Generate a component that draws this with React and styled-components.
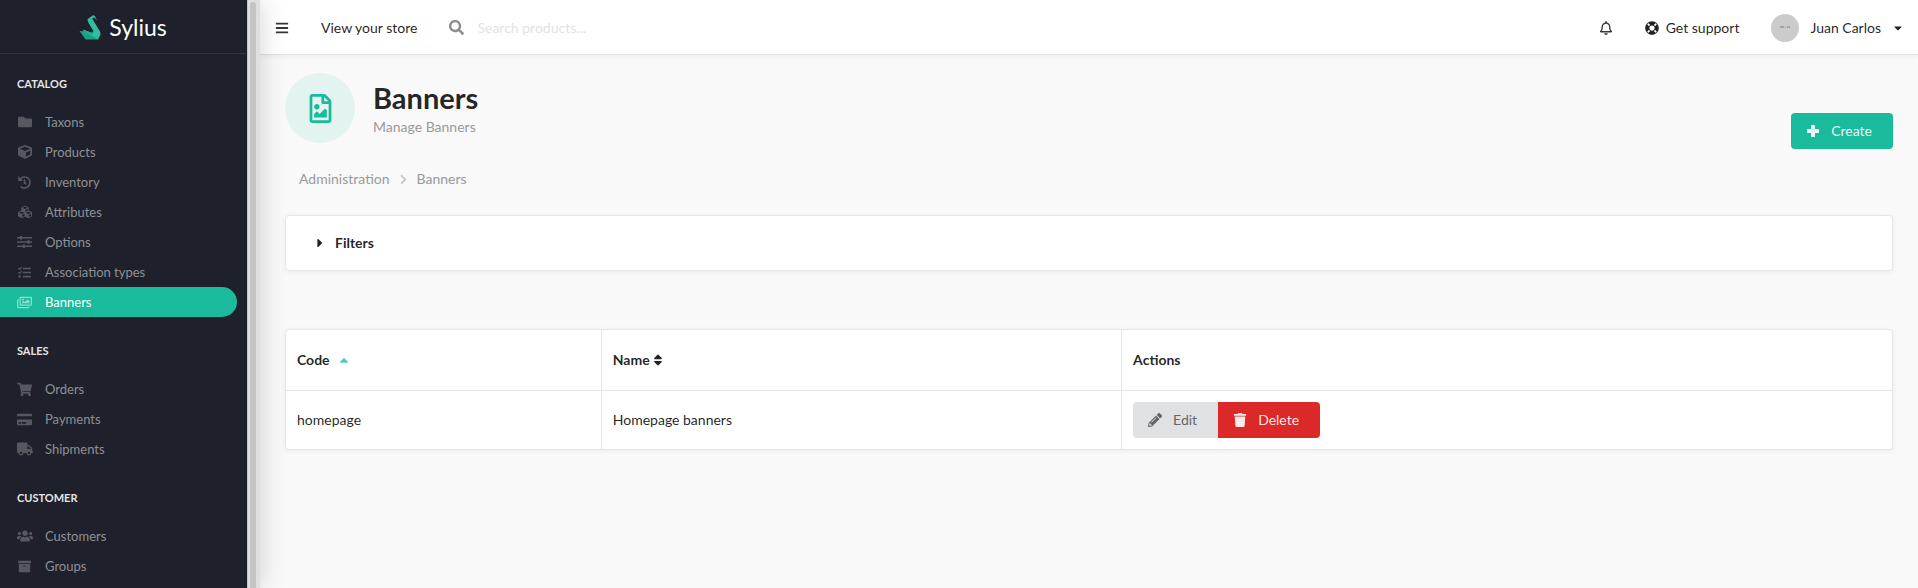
import React from 'react';
import styled, { createGlobalStyle } from 'styled-components';
import {
  FaFolder, FaCube, FaHistory, FaCubes, FaTasks, FaRegImages, FaShoppingCart,
  FaCreditCard, FaTruck, FaUsers, FaArchive, FaBars, FaSearch, FaRegBell, FaLifeRing,
  FaCaretDown, FaCaretRight, FaCaretUp, FaRegFileImage, FaPencilAlt, FaTrash, FaSort,
  FaChevronRight,
} from 'react-icons/fa';

const GlobalStyle = createGlobalStyle`
  *, *::before, *::after { box-sizing: border-box; }
  body {
    margin: 0;
    background: #f9f9f9;
    color: rgba(0, 0, 0, 0.87);
    font: 14px/20px Lato, "Liberation Sans", sans-serif;
  }
  a { color: inherit; text-decoration: none; }
  button, input { font: inherit; }
  svg { display: block; flex: none; }
`;

const Page = styled.div`
  display: flex;
  height: 100vh;
  overflow: hidden;
`;

const Sidebar = styled.aside`
  display: flex;
  flex: none;
  width: 260px;
  background: #dfdfde;
  box-shadow: 0 0 24px rgba(34, 36, 38, 0.2);
  z-index: 2;
`;

const SidebarPanel = styled.nav`
  flex: 1;
  background: #1e212b;
  border-right: 1px solid #1b1a26;
  overflow: hidden;
`;

const ScrollTrack = styled.div`
  flex: none;
  width: 13px;
  padding: 2px 4px 0 2px;
  border-left: 1px solid #c6c7c6;
`;

const ScrollThumb = styled.div`
  height: 100%;
  border-radius: 3px 3px 0 0;
  background: #c3c4c3;
`;

const Brand = styled.a`
  display: flex;
  align-items: center;
  justify-content: center;
  gap: 8px;
  height: 54px;
  border-bottom: 1px solid #31343d;
  color: #fff;
  font-size: 23px;
`;

const Section = styled.section`
  padding-top: 24px;
  &:first-of-type { padding-top: 20px; }
`;

const SectionTitle = styled.h2`
  margin: 0 0 13px;
  padding: 0 17px;
  color: #e4e4e6;
  font-size: 11px;
  line-height: 20px;
  font-weight: 700;
  text-transform: uppercase;
`;

const MenuItem = styled.a`
  display: flex;
  align-items: center;
  gap: 12px;
  height: 30px;
  margin-right: 9px;
  padding-left: 16px;
  border-radius: 0 15px 15px 0;
  background: ${({ $active }) => ($active ? '#1abb9c' : 'transparent')};
  color: ${({ $active }) => ($active ? '#fff' : '#8e9095')};
  font-size: 13px;
`;

const MenuIcon = styled.span`
  display: flex;
  justify-content: center;
  width: 17px;
  font-size: ${({ $size }) => $size}px;
  opacity: 0.5;
`;

const Main = styled.div`
  display: flex;
  flex-direction: column;
  flex: 1;
  min-width: 0;
`;

const TopBar = styled.header`
  display: flex;
  align-items: center;
  justify-content: space-between;
  flex: none;
  height: 55px;
  padding: 1px 14px 0 15px;
  background: #fff;
  border-bottom: 1px solid #e2e2e3;
  box-shadow: 0 1px 5px rgba(34, 36, 38, 0.07);
`;

const TopGroup = styled.div`
  display: flex;
  align-items: center;
  gap: 32px;
`;

const IconButton = styled.button`
  display: flex;
  padding: 0;
  border: 0;
  background: none;
  color: #35363a;
`;

const SearchBox = styled.label`
  display: flex;
  align-items: center;
  gap: 13px;
  color: #8c8c8c;
  svg { font-size: 15px; }
`;

const SearchInput = styled.input`
  width: 200px;
  padding: 0;
  border: 0;
  outline: 0;
  background: none;
  color: inherit;
  &::placeholder { color: #e2e2e3; opacity: 1; }
`;

const TopLink = styled.a`
  display: flex;
  align-items: center;
  gap: 7px;
`;

const UserButton = styled.button`
  display: flex;
  align-items: center;
  gap: 11px;
  padding: 0;
  border: 0;
  background: none;
  color: inherit;
  > svg { font-size: 12px; }
`;

const Avatar = styled.span`
  display: flex;
  align-items: center;
  justify-content: center;
  width: 28px;
  height: 28px;
  border-radius: 50%;
  background: #cbcbcb;
`;

const Content = styled.main`
  padding: 18px 25px;
`;

const Heading = styled.div`
  display: flex;
  align-items: center;
  justify-content: space-between;
`;

const HeadingTitle = styled.div`
  display: flex;
  align-items: center;
  gap: 18px;
`;

const HeadingIcon = styled.span`
  display: flex;
  align-items: center;
  justify-content: center;
  width: 70px;
  height: 70px;
  border-radius: 50%;
  background: #e3f3ef;
  color: #1abb9c;
  font-size: 29px;
`;

const Title = styled.h1`
  margin: 0;
  padding-top: 2px;
  font-size: 29px;
  line-height: 34px;
  font-weight: 700;
`;

const Subtitle = styled.p`
  margin: 2px 0 0;
  color: #999;
`;

const Button = styled.button`
  display: flex;
  align-items: center;
  gap: 11px;
  height: 36px;
  padding: 0 21px 0 15px;
  border: 0;
  border-radius: 4px;
  background: ${({ $color }) => $color};
  color: ${({ $text }) => $text || 'rgba(255, 255, 255, 0.9)'};
`;

const HeadingAction = styled.div`
  align-self: flex-end;
  margin-bottom: -6px;
`;

const Breadcrumb = styled.nav`
  display: flex;
  align-items: center;
  gap: 8px;
  padding: 26px 14px;
  color: #999;
  svg { color: #c4c4c4; font-size: 11px; }
`;

const Panel = styled.section`
  background: #fff;
  border: 1px solid #e6e6e7;
  border-radius: 4px;
  box-shadow: 0 1px 5px rgba(34, 36, 38, 0.07);
`;

const FilterToggle = styled.button`
  display: flex;
  align-items: center;
  gap: 8px;
  width: 100%;
  height: 54px;
  padding: 0 27px;
  border: 0;
  background: none;
  color: inherit;
  font-weight: 700;
`;

const TablePanel = styled(Panel)`
  margin-top: 58px;
`;

const Table = styled.table`
  width: 100%;
  table-layout: fixed;
  border-collapse: separate;
  border-spacing: 0;
  text-align: left;
`;

const HeadCell = styled.th`
  width: ${({ $width }) => $width || 'auto'};
  height: 61px;
  padding: 0 11px;
  border-bottom: 1px solid #e6e6e7;
  & + & { border-left: 1px solid #e6e6e7; }
`;

const Cell = styled.td`
  height: 58px;
  padding: 0 11px;
  & + & { border-left: 1px solid #e6e6e7; }
`;

const SortLink = styled.a`
  display: flex;
  align-items: center;
  gap: ${({ $gap }) => $gap}px;
`;

const ButtonGroup = styled.div`
  display: flex;
  button:first-child { border-radius: 4px 0 0 4px; }
  button:last-child { border-radius: 0 4px 4px 0; }
`;

const Swan = () => (
  <svg width="22" height="26" viewBox="0 0 22 26" aria-hidden="true">
    <path fill="#1aa183" d="M0.5 17 L4.5 17.2 L4 15.4 L12.5 18.5 L15.5 16.5 L19.6 25.6 L6.6 25.6 Z" />
    <path fill="#2fbfa0" d="M14.3 1 L8.5 5.2 L9 8 L13.5 15.5 L15 18 L12 21 L18.8 25.6 L21.6 20.4 L21.2 18 L13.2 4.6 L15.2 3.4 L18 6.6 L16.2 2.6 Z" />
    <path fill="#25ad8e" d="M4 15.4 L14 19.5 L12 22 L6.5 19 Z" />
  </svg>
);

const SlidersIcon = () => (
  <svg width="15" height="12" viewBox="0 0 15 12" fill="currentColor" aria-hidden="true">
    <path d="M0 1h3V0h2v1h10v1.6H5v1H3v-1H0zM0 5.2h10.5v-1h2v1H15v1.6h-2.5v1h-2v-1H0zM0 9.4h6v-1h2v1h7V11H8v1H6v-1H0z" />
  </svg>
);

const PlusIcon = () => (
  <svg width="14" height="14" viewBox="0 0 14 14" fill="currentColor" aria-hidden="true">
    <path d="M5.6 1h2.8q.6 0 .6.6V5h3.4q.6 0 .6.6v2.8q0 .6-.6.6H9v3.4q0 .6-.6.6H5.600q-.6 0-.6-.6V9H1.600Q1 9 1 8.400V5.600Q1 5 1.600 5H5V1.600Q5 1 5.600 1z" />
  </svg>
);

const sections = [
  { title: 'Catalog', items: [
    ['Taxons', FaFolder, 14],
    ['Products', FaCube, 14],
    ['Inventory', FaHistory, 13],
    ['Attributes', FaCubes, 14],
    ['Options', SlidersIcon, 14],
    ['Association types', FaTasks, 13],
    ['Banners', FaRegImages, 15],
  ] },
  { title: 'Sales', items: [
    ['Orders', FaShoppingCart, 15],
    ['Payments', FaCreditCard, 15],
    ['Shipments', FaTruck, 16],
  ] },
  { title: 'Customer', items: [
    ['Customers', FaUsers, 16],
    ['Groups', FaArchive, 13],
  ] },
];

export default function App() {
  return (
    <>
      <GlobalStyle />
      <Page>
        <Sidebar>
          <SidebarPanel aria-label="Administration menu">
            <Brand href="#"><Swan />Sylius</Brand>
            {sections.map(({ title, items }) => (
              <Section key={title}>
                <SectionTitle>{title}</SectionTitle>
                {items.map(([label, Icon, size]) => (
                  <MenuItem key={label} href="#" $active={label === 'Banners'}>
                    <MenuIcon $size={size}><Icon /></MenuIcon>
                    {label}
                  </MenuItem>
                ))}
              </Section>
            ))}
          </SidebarPanel>
          <ScrollTrack><ScrollThumb /></ScrollTrack>
        </Sidebar>
        <Main>
          <TopBar>
            <TopGroup>
              <IconButton aria-label="Toggle menu"><FaBars /></IconButton>
              <a href="#">View your store</a>
              <SearchBox>
                <FaSearch />
                <SearchInput type="text" placeholder="Search products..." aria-label="Search products" />
              </SearchBox>
            </TopGroup>
            <TopGroup>
              <IconButton aria-label="Notifications"><FaRegBell /></IconButton>
              <TopLink href="#"><FaLifeRing />Get support</TopLink>
              <UserButton>
                <Avatar>
                  <svg width="10" height="3" viewBox="0 0 10 3" fill="#a6a6a6" aria-hidden="true">
                    <path d="M0 0h4v2H0zM5 1h1v1H5zM7 0h3v2H7z" />
                  </svg>
                </Avatar>
                Juan Carlos
                <FaCaretDown />
              </UserButton>
            </TopGroup>
          </TopBar>
          <Content>
            <Heading>
              <HeadingTitle>
                <HeadingIcon><FaRegFileImage /></HeadingIcon>
                <div>
                  <Title>Banners</Title>
                  <Subtitle>Manage Banners</Subtitle>
                </div>
              </HeadingTitle>
              <HeadingAction>
                <Button $color="#1abb9c"><PlusIcon />Create</Button>
              </HeadingAction>
            </Heading>
            <Breadcrumb aria-label="Breadcrumb">
              <a href="#">Administration</a>
              <FaChevronRight />
              <span>Banners</span>
            </Breadcrumb>
            <Panel>
              <FilterToggle><FaCaretRight />Filters</FilterToggle>
            </Panel>
            <TablePanel>
              <Table>
                <thead>
                  <tr>
                    <HeadCell $width="19.6%"><SortLink href="#" $gap={7}>Code <FaCaretUp color="#4dcbb4" /></SortLink></HeadCell>
                    <HeadCell $width="32.4%"><SortLink href="#" $gap={1}>Name <FaSort /></SortLink></HeadCell>
                    <HeadCell>Actions</HeadCell>
                  </tr>
                </thead>
                <tbody>
                  <tr>
                    <Cell>homepage</Cell>
                    <Cell>Homepage banners</Cell>
                    <Cell>
                      <ButtonGroup>
                        <Button $color="#e0e1e2" $text="#666"><FaPencilAlt />Edit</Button>
                        <Button $color="#db2828"><FaTrash />Delete</Button>
                      </ButtonGroup>
                    </Cell>
                  </tr>
                </tbody>
              </Table>
            </TablePanel>
          </Content>
        </Main>
      </Page>
    </>
  );
}
